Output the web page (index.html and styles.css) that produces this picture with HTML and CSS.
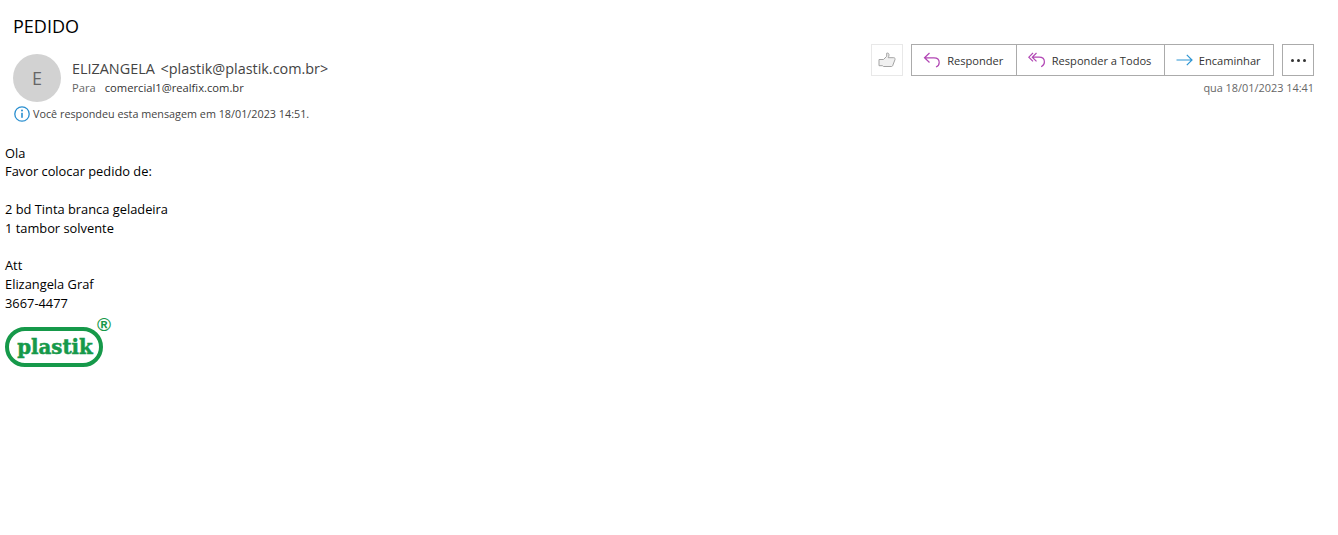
FILE: index.html
```html
<!DOCTYPE html>
<html lang="pt-BR">
<head>
  <meta charset="UTF-8" />
  <title>PEDIDO</title>
  <link rel="stylesheet" href="styles.css">
</head>
<body>

  <h1 class="subject">PEDIDO</h1>

  <div class="header">
    <div class="sender">
      <div class="avatar">E</div>
      <div class="sender-info">
        <div class="from">ELIZANGELA <span class="addr">&lt;plastik@plastik.com.br&gt;</span></div>
        <div class="to"><span class="to-label">Para</span>comercial1@realfix.com.br</div>
      </div>
    </div>

    <div class="actions">
      <div class="toolbar">
        <button class="like" aria-label="Curtir">
          <svg width="18" height="17" viewBox="0 0 18 17" fill="#f0f0f0" stroke="#a3a3a3" stroke-width="1">
            <path d="M1 7.5h4.5l3.2-3.2V1.2c1.3-.5 2.3.3 2.3 1.6 0 1-.4 2-.8 2.9h5.6c1 0 1.6 1 1.2 1.9l-2.4 6.2c-.2.5-.6.7-1.1.7H5.5l-1-.8H1z"/>
          </svg>
        </button>
        <div class="btn-group">
          <button>
            <svg width="18" height="16" viewBox="0 0 18 16" fill="none" stroke="#b146b4" stroke-width="1.2">
              <path d="M6.5 1 1.500 5.800l5 4.700M1.500 5.800h9.500c3.600 0 5.200 2 5.200 4.600 0 2.200-1.200 3.800-3.200 4.600"/>
            </svg>
            Responder
          </button>
          <button>
            <svg width="18" height="16" viewBox="0 0 18 16" fill="none" stroke="#b146b4" stroke-width="1.2">
              <path d="M5 1 .8 5.200l4.200 4.200M8.500 1 4.300 5.200l4.200 4.200M4.300 5.200H11c3.600 0 5.400 2 5.400 4.800 0 2.200-1.200 3.800-3.200 4.800"/>
            </svg>
            Responder a Todos
          </button>
          <button>
            <svg width="17" height="12" viewBox="0 0 17 12" fill="none" stroke="#2f96d3" stroke-width="1.2">
              <path d="M.5 6h15.500M10.800 .8 16 6l-5.200 5.200"/>
            </svg>
            Encaminhar
          </button>
        </div>
        <button class="more" aria-label="Mais">
          <span class="dot"></span><span class="dot"></span><span class="dot"></span>
        </button>
      </div>
      <div class="date">qua 18/01/2023 14:41</div>
    </div>
  </div>

  <div class="notice">
    <svg width="16" height="16" viewBox="0 0 16 16">
      <circle cx="8" cy="8" r="7.200" fill="none" stroke="#2a8fd0" stroke-width="1.300"/>
      <circle cx="8" cy="4.600" r="1" fill="#2a8fd0"/>
      <rect x="7.200" y="6.800" width="1.600" height="5" fill="#2a8fd0"/>
    </svg>
    Você respondeu esta mensagem em 18/01/2023 14:51.
  </div>

  <div class="message">
    <p>Ola</p>
    <p>Favor colocar pedido de:</p>
    <p>&nbsp;</p>
    <p>2 bd Tinta branca geladeira</p>
    <p>1 tambor solvente</p>
    <p>&nbsp;</p>
    <p>Att</p>
    <p>Elizangela Graf</p>
    <p>3667-4477</p>
    <div class="logo">
      <span class="logo-word">plastik</span>
      <span class="logo-reg">®</span>
    </div>
  </div>

</body>
</html>
```

FILE: styles.css
```css
body {
  margin: 0;
  font-family: "Open Sans", sans-serif;
  color: #222;
  background: #fff;
}

.subject {
  margin: 0;
  padding: 14px 0 1px 13px;
  font-size: 18px;
  line-height: 24px;
  font-weight: 400;
  color: #000;
}

.header {
  display: flex;
  justify-content: space-between;
  padding: 5px 24px 0 13px;
}

.sender {
  display: flex;
  gap: 11px;
  margin-top: 10px;
}

.avatar {
  width: 48px;
  height: 48px;
  border-radius: 50%;
  background: #d2d2d2;
  color: #666;
  font-size: 18px;
  line-height: 48px;
  text-align: center;
}

.from {
  margin-top: 5px;
  font-size: 14.400px;
  line-height: 20px;
  color: #444;
}

.addr {
  margin-left: 2px;
}

.to {
  margin-top: 1px;
  font-size: 11.200px;
  line-height: 16px;
  color: #333;
}

.to-label {
  margin-right: 9px;
  color: #666;
}

.actions {
  display: flex;
  flex-direction: column;
  align-items: flex-end;
}

.toolbar {
  display: flex;
  gap: 8px;
}

button {
  display: flex;
  align-items: center;
  height: 32px;
  padding: 0;
  font-family: inherit;
  font-size: 11.100px;
  color: #333;
  background: #fff;
  border: 1px solid #ababab;
}

.like {
  justify-content: center;
  width: 32px;
  border-color: #e8e8e8;
}

.btn-group {
  display: flex;
}

.btn-group button {
  gap: 6px;
  padding: 0 12.400px 0 11px;
}

.btn-group button + button {
  margin-left: -1px;
}

.more {
  justify-content: center;
  gap: 3px;
  width: 32px;
}

.dot {
  width: 3px;
  height: 3px;
  border-radius: 50%;
  background: #333;
}

.date {
  margin-top: 4px;
  font-size: 10.900px;
  line-height: 16px;
  color: #666;
}

.notice {
  display: flex;
  align-items: center;
  gap: 3px;
  margin: 4px 0 0 14px;
  font-size: 10.800px;
  line-height: 16px;
  color: #444;
}

.message {
  margin-top: 21.600px;
  padding-left: 5px;
  font-size: 12.850px;
  color: #000;
}

.message p {
  margin: 0;
  line-height: 18.800px;
}

.logo {
  position: relative;
  width: 98px;
  height: 40px;
  box-sizing: border-box;
  margin-top: 14.400px;
  border: 4px solid #16994a;
  border-radius: 20px;
  text-align: center;
}

.logo-word {
  font-family: "DejaVu Serif", serif;
  font-size: 19.800px;
  font-weight: 700;
  line-height: 32px;
  margin-left: 2px;
  color: #16994a;
  -webkit-text-stroke: 0.5px #16994a;
}

.logo-reg {
  position: absolute;
  top: -16px;
  right: -12px;
  font-family: "Liberation Sans", sans-serif;
  font-size: 19px;
  line-height: 20px;
  font-weight: 700;
  color: #16994a;
}
```
